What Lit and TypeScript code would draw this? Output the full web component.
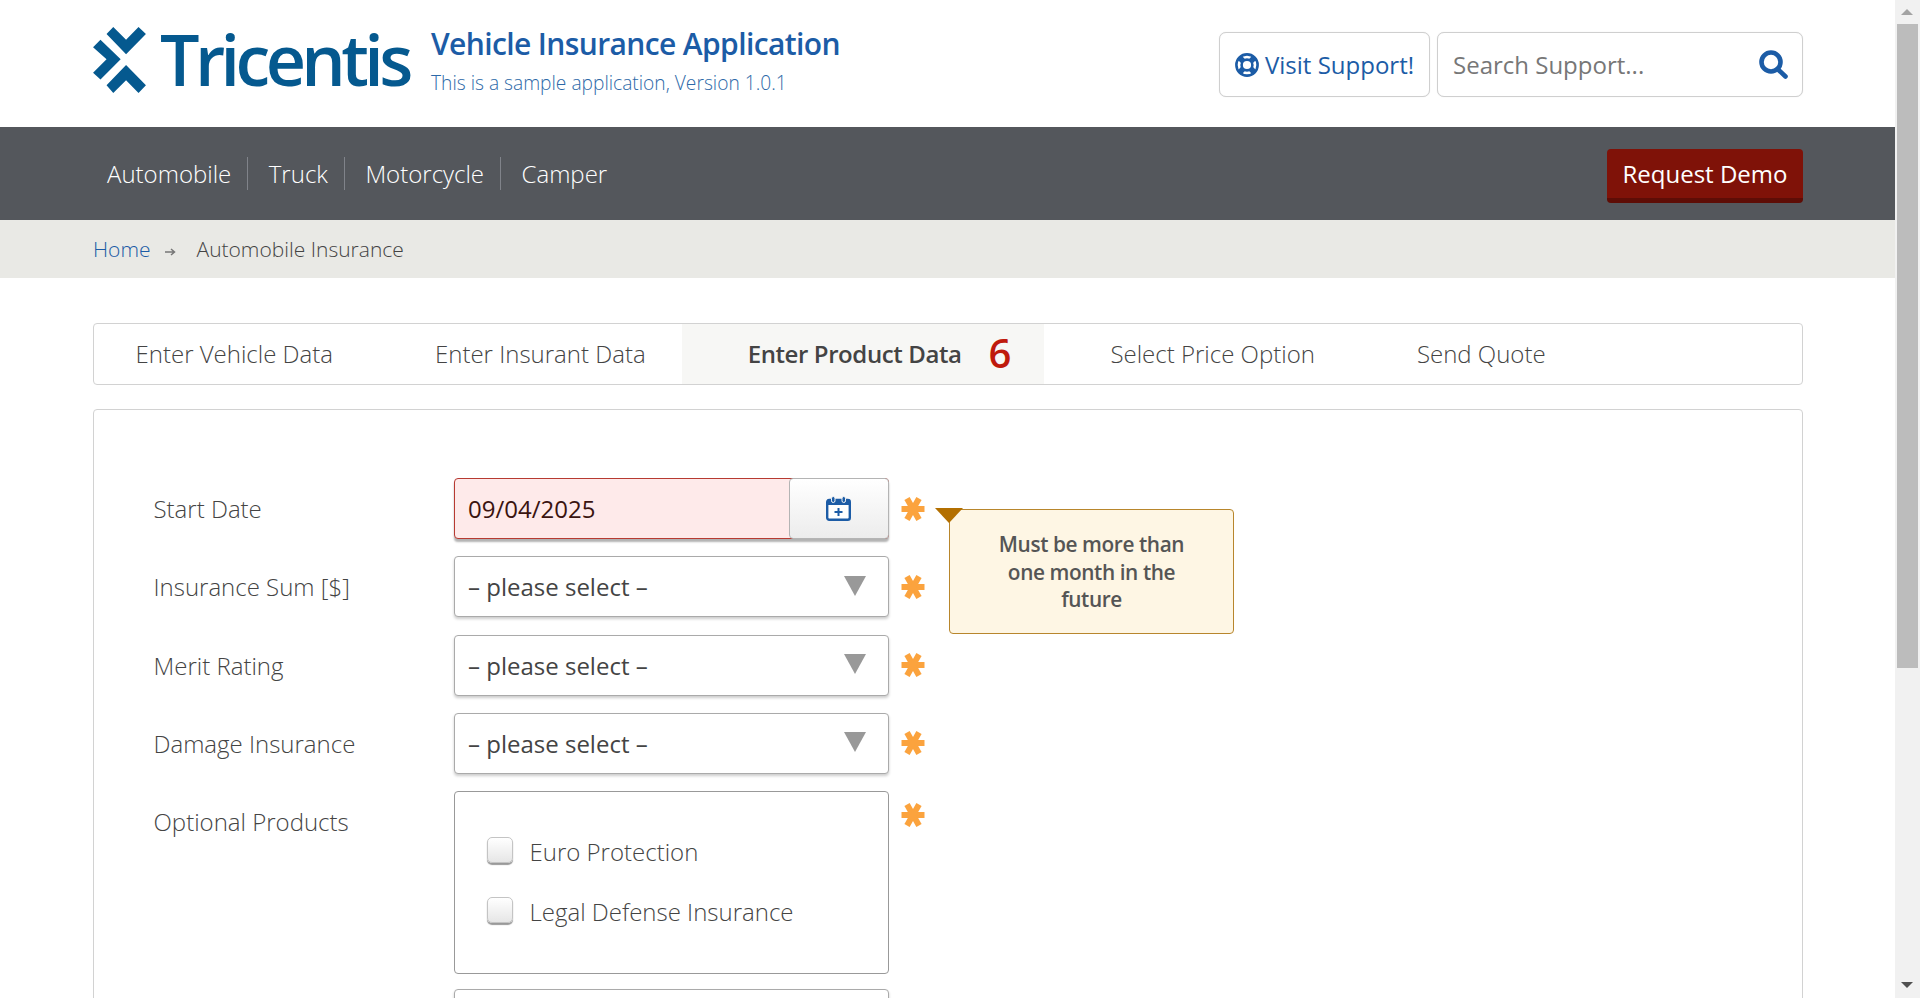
import { LitElement, html, css } from "lit";
import { customElement } from "lit/decorators.js";

const star = html`<svg class="star" viewBox="0 0 24 24" aria-hidden="true"><g stroke="#fba33e" stroke-width="6" stroke-linecap="butt"><line x1="0.500" y1="12" x2="23.500" y2="12"/><line x1="6" y1="1.600" x2="18" y2="22.400"/><line x1="18" y1="1.600" x2="6" y2="22.400"/></g></svg>`;
const caret = html`<svg class="caret" viewBox="0 0 22 20" aria-hidden="true"><path d="M0 0H22L11 20Z" fill="#999"/></svg>`;

@customElement("app-root")
export class AppRoot extends LitElement {
  static styles = css`
    :host { display: flex; width: 100%; height: 100vh; overflow: hidden; font-family: "Open Sans", "Liberation Sans", sans-serif; color: #444; background: #fff; }
    .page { flex: 1; min-width: 0; overflow: hidden; }
    .wrap { padding: 0 92px 0 93px; display: flex; align-items: center; }

    .header { height: 127px; }
    .logo { display: flex; align-items: flex-start; gap: 14px; width: 338px; flex: none; color: #05598f; margin-bottom: 8px; }
    .mark { width: 53px; height: 66px; flex: none; }
    .logotext { font-size: 70px; font-weight: 600; letter-spacing: -4.600px; line-height: 64px; }
    .titles { flex: 1; padding-bottom: 6px; }
    .title { font-size: 30px; font-weight: 600; letter-spacing: -0.620px; color: #1c5ca6; line-height: 40px; }
    .sub { font-size: 19.200px; font-weight: 300; color: #2d69a8; line-height: 28px; margin-top: 5px; }
    .pill { height: 65px; box-sizing: border-box; border: 1px solid #cfcfcf; border-radius: 7px; box-shadow: 0 0 1px #ddd; display: flex; align-items: center; background: #fff; font-size: 24px; margin-top: 2px; }
    .visit { width: 211px; padding-left: 15px; gap: 6px; color: #1c5ca6; margin-right: 7px; }
    .search { width: 366px; padding: 0 14px 0 15px; justify-content: space-between; color: #777; }
    .lifering { width: 24px; height: 24px; }
    .glass { width: 29px; height: 29px; }

    .nav { background: #54575c; height: 93px; }
    .nav .wrap { height: 100%; justify-content: space-between; }
    .menu { display: flex; align-items: center; color: #fff; font-size: 24px; font-weight: 300; }
    .menu span { height: 33px; line-height: 33px; padding: 0 16px 0 20.500px; border-right: 1px solid #80838a; }
    .menu span:first-child { padding-left: 14px; }
    .menu span:last-child { border: 0; }
    .demo { width: 196px; height: 54px; box-sizing: border-box; background: #7f1208; border-bottom: 5px solid #5e0d06; border-radius: 4px; color: #fff; font-size: 24px; display: flex; align-items: center; justify-content: center; margin-top: 4px; }

    .crumb { background: #e9e9e5; height: 58px; font-size: 21px; font-weight: 300; color: #444; }
    .crumb .wrap { height: 100%; }
    .crumb a { color: #1c5ca6; }
    .arr { width: 11px; height: 10px; margin: 5px 21px 0 14px; }

    .content { padding: 45px 92px 0 93px; }
    .tabs { height: 62px; box-sizing: border-box; border: 1px solid #d2d2d2; border-radius: 4px; display: flex; font-size: 24px; font-weight: 300; color: #444; }
    .tab { padding: 0 37px 2px 65px; display: flex; align-items: center; }
    .tab.first { padding-left: 41.500px; }
    .tab.second { padding-right: 36px; }
    .tab.active { background: #f7f7f5; font-weight: 600; letter-spacing: -0.400px; padding-left: 66px; padding-right: 33px; }
    .tab.after { padding-left: 66px; }
    .six { color: #bf1a0c; font-size: 40px; font-weight: 600; letter-spacing: 0; margin-left: 27px; line-height: 1; }

    .form { margin-top: 24px; height: 700px; box-sizing: border-box; border: 1px solid #d2d2d2; border-radius: 4px; padding: 68px 0 0 59px; position: relative; }
    .row { display: flex; align-items: center; height: 61px; margin-bottom: 17.250px; }
    .row.top { align-items: flex-start; height: auto; margin-bottom: 15px; }
    .label { width: 301px; flex: none; padding-left: 0.500px; box-sizing: border-box; font-size: 24px; font-weight: 300; color: #444; line-height: 61px; }
    .ctl { width: 435px; height: 61px; box-sizing: border-box; flex: none; border: 1px solid #aaa; border-radius: 4px; box-shadow: 0 2px 3px rgba(0,0,0,.2); display: flex; align-items: center; font-size: 24px; padding-left: 13px; justify-content: space-between; background: #fff; color: #444; }
    .caret { width: 22px; height: 20px; margin-right: 22px; margin-top: -2px; }
    .date { background: #feeaea; border-color: #b73a32; padding: 0 0 0 13px; color: #3a1410; box-shadow: 0 3px 2px rgba(0,0,0,.3); }
    .calbtn { width: 100px; height: 61px; margin: -1px -1px -1px 0; box-sizing: border-box; border: 1px solid #b4b4b4; border-radius: 4px; background: linear-gradient(#fff, #ececec); display: flex; align-items: center; justify-content: center; }
    .cal { width: 25px; height: 25px; margin-left: -2px; }
    .star { width: 24px; height: 24px; margin-left: 12px; flex: none; }
    .top .star { margin-top: 12px; }
    .checks { height: 182.500px; box-shadow: none; border-color: #999; display: block; padding: 45px 0 0 32px; }
    .check { display: flex; align-items: center; gap: 16.500px; height: 26px; margin-bottom: 34px; font-weight: 300; color: #444; }
    .check span:last-child { padding-top: 3px; }
    .box { width: 26px; height: 26px; box-sizing: border-box; border: 1px solid #c4c4c4; border-radius: 5px; background: linear-gradient(#fff, #e6e6e6); box-shadow: 0 2px 1px #999; flex: none; }

    .tip { position: absolute; left: 855px; top: 99px; width: 285px; height: 125px; box-sizing: border-box; border: 1px solid #b8862c; border-radius: 4px; background: #fef6e4; font-size: 20.800px; line-height: 27.500px; color: #555; font-weight: 600; letter-spacing: -0.400px; text-align: center; padding: 21px 30px 0; }
    .tip svg { position: absolute; left: -15px; top: -2px; width: 28px; height: 15px; }

    .bar { width: 25px; flex: none; background: #f1f1f1; display: flex; flex-direction: column; align-items: center; position: relative; }
    .thumb { width: 21px; height: 644px; background: #bcbcbc; margin-top: 24px; }
    .sa { position: absolute; left: 6px; width: 12px; height: 6px; }
    .sa.u { top: 9px; }
    .sa.d { bottom: 10px; }
  `;

  render() {
    const sel = (l: string) => html`<div class="row"><div class="label">${l}</div><div class="ctl"><span>– please select –</span>${caret}</div>${star}</div>`;
    return html`
      <div class="page">
        <div class="wrap header">
          <div class="logo">
            <svg class="mark" viewBox="40 37 157 196" aria-hidden="true"><g fill="#05598f">
              <path d="M100 37L138 75L175 37L197 58L138 118L80 58Z"/>
              <path d="M138 150L197 210L175 233L138 195L100 233L80 210Z"/>
              <path d="M62 75L122 133L62 193L40 173L80 133L40 97Z"/>
            </g></svg>
            <span class="logotext">Tricentis</span>
          </div>
          <div class="titles">
            <div class="title">Vehicle Insurance Application</div>
            <div class="sub">This is a sample application, Version 1.0.1</div>
          </div>
          <div class="pill visit">
            <svg class="lifering" viewBox="0 0 24 24" aria-hidden="true">
              <g fill="none" stroke="#1c5ca6">
                <circle cx="12" cy="12" r="10.600" stroke-width="2.600"/>
                <circle cx="12" cy="12" r="5.400" stroke-width="2.600"/>
                <g stroke-width="5.500"><line x1="4.500" y1="4.500" x2="8.200" y2="8.200"/><line x1="19.500" y1="4.500" x2="15.800" y2="8.200"/><line x1="4.500" y1="19.500" x2="8.200" y2="15.800"/><line x1="19.500" y1="19.500" x2="15.800" y2="15.800"/></g>
              </g>
            </svg>
            <span>Visit Support!</span>
          </div>
          <div class="pill search">
            <span>Search Support...</span>
            <svg class="glass" viewBox="0 0 29 29" aria-hidden="true"><circle cx="12" cy="12" r="9.500" fill="none" stroke="#1c5ca6" stroke-width="4.600"/><line x1="18.500" y1="19" x2="26.500" y2="26.500" stroke="#1c5ca6" stroke-width="4.600" stroke-linecap="round"/></svg>
          </div>
        </div>

        <div class="nav"><div class="wrap">
          <div class="menu"><span>Automobile</span><span>Truck</span><span>Motorcycle</span><span>Camper</span></div>
          <div class="demo">Request Demo</div>
        </div></div>

        <div class="crumb"><div class="wrap">
          <a>Home</a>
          <svg class="arr" viewBox="0 0 11 10" aria-hidden="true"><path d="M0 5H9M6 2L9.500 5L6 8" fill="none" stroke="#777" stroke-width="1.500"/></svg>
          <span>Automobile Insurance</span>
        </div></div>

        <div class="content">
          <div class="tabs">
            <div class="tab first">Enter Vehicle Data</div>
            <div class="tab second">Enter Insurant Data</div>
            <div class="tab active">Enter Product Data<span class="six">6</span></div>
            <div class="tab after">Select Price Option</div>
            <div class="tab">Send Quote</div>
          </div>

          <div class="form">
            <div class="row">
              <div class="label">Start Date</div>
              <div class="ctl date">
                <span>09/04/2025</span>
                <div class="calbtn">
                  <svg class="cal" viewBox="0 0 25 25" aria-hidden="true">
                    <rect x="1.200" y="4" width="22.600" height="19.800" rx="2" fill="#fff" stroke="#1c5ca6" stroke-width="2.400"/>
                    <path d="M1 5a2 2 0 0 1 2-2h19a2 2 0 0 1 2 2v4H1Z" fill="#1c5ca6"/>
                    <rect x="5.500" y="0.500" width="3.500" height="6" rx="1.700" fill="#1c5ca6" stroke="#f6f6f6" stroke-width="1"/>
                    <rect x="16" y="0.500" width="3.500" height="6" rx="1.700" fill="#1c5ca6" stroke="#f6f6f6" stroke-width="1"/>
                    <path d="M12.500 12V20M8.500 16H16.500" stroke="#1c5ca6" stroke-width="2"/>
                  </svg>
                </div>
              </div>
              ${star}
            </div>
            ${sel("Insurance Sum [$]")}
            ${sel("Merit Rating")}
            ${sel("Damage Insurance")}
            <div class="row top">
              <div class="label">Optional Products</div>
              <div class="ctl checks">
                <div class="check"><span class="box"></span><span>Euro Protection</span></div>
                <div class="check"><span class="box"></span><span>Legal Defense Insurance</span></div>
              </div>
              ${star}
            </div>
            <div class="row"><div class="label"></div><div class="ctl"></div></div>

            <div class="tip">
              <svg viewBox="0 0 28 15" aria-hidden="true"><path d="M0 0H28L14 15Z" fill="#b36f00"/></svg>
              Must be more than one month in the future
            </div>
          </div>
        </div>
      </div>
      <div class="bar">
        <svg class="sa u" viewBox="0 0 12 6" aria-hidden="true"><path d="M0 6L6 0L12 6Z" fill="#a3a3a3"/></svg>
        <div class="thumb"></div>
        <svg class="sa d" viewBox="0 0 12 6" aria-hidden="true"><path d="M0 0L6 6L12 0Z" fill="#505050"/></svg>
      </div>
    `;
  }
}
